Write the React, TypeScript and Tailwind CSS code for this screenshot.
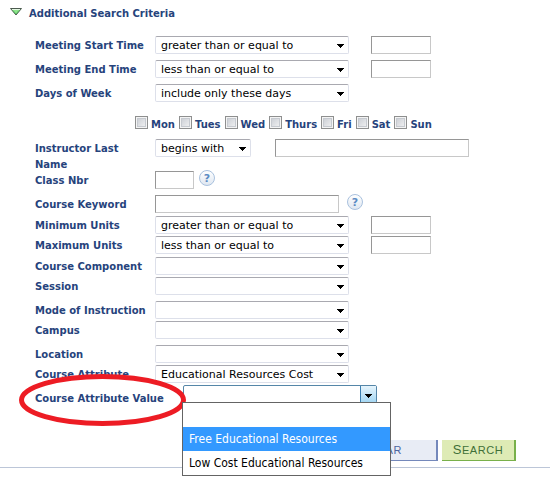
import React from 'react';

type SelectProps = {
  id: string;
  label?: string;
  options: string[];
  className?: string;
};

const Select = ({ id, label, options, className = 'w-[194px]' }: SelectProps) => (
  <div className={`relative shrink-0 ${className}`}>
    <select
      id={id}
      aria-label={label}
      className="block h-[18px] w-full appearance-none rounded-[2px] border border-[#dde0ea] border-t-[#a9a9b0] bg-white pt-px pr-5 pl-[5px] text-[11px] leading-4 text-black"
    >
      {options.map(option => (
        <option key={option}>{option}</option>
      ))}
    </select>
    <svg viewBox="0 0 7 4" className="pointer-events-none absolute top-2 right-[5px] h-1 w-[7px]" shapeRendering="crispEdges">
      <path d="M0 0h7v1H6v1H5v1H4v1H3V3H2V2H1V1H0z" fill="#000" />
    </svg>
  </div>
);

const TextField = ({ id, label, className = 'w-[60px]' }: { id: string; label?: string; className?: string }) => (
  <input
    id={id}
    type="text"
    aria-label={label}
    className={`h-[18px] min-w-0 border border-[#c8c8c8] border-t-[#969696] border-l-[#969696] bg-white px-1 text-[11px] ${className}`}
  />
);

type RowProps = {
  id: string;
  label: string;
  className?: string;
  children: React.ReactNode;
};

const Row = ({ id, label, className = 'h-5', children }: RowProps) => (
  <div className={`flex items-start ${className}`}>
    <label htmlFor={id} className="w-[120px] shrink-0 pt-[2px] pr-4 whitespace-nowrap">
      {label}
    </label>
    {children}
  </div>
);

const HelpButton = ({ label, className }: { label: string; className: string }) => (
  <button
    type="button"
    aria-label={label}
    className={`-mt-px flex h-4 w-4 shrink-0 items-center justify-center rounded-full border border-[#a9c1de] bg-gradient-to-b from-white to-[#dfe7f1] text-[11px] leading-none font-bold text-[#5c8bc4] ${className}`}
  >
    ?
  </button>
);

const days = ['Mon', 'Tues', 'Wed', 'Thurs', 'Fri', 'Sat', 'Sun'];

const attributeValues = ['', 'Free Educational Resources', 'Low Cost Educational Resources'];

export default function App() {
  return (
    <div className="bg-white pb-3 font-['Verdana','DejaVu_Sans',sans-serif] text-[10px] leading-4 font-bold text-[#26437c]">
      <form className="border-b border-[#bcc6d8] pt-[6px] pb-[6px]" onSubmit={e => e.preventDefault()}>
        <h2 className="mb-[14px] pl-[10px]">
          <button type="button" aria-expanded="true" className="flex items-start gap-[7px] font-bold">
            <svg viewBox="0 0 12 8" className="mt-[2px] h-2 w-3">
              <path d="M.5.5h11L6 7z" fill="#8fe68c" stroke="#4c5a50" />
              <path d="M2 1.5h8" stroke="#e4f8e2" />
              <path d="M3 2.5 6 6l3-3.5" fill="none" stroke="#4fb85a" strokeWidth=".8" />
            </svg>
            Additional Search Criteria
          </button>
        </h2>

        <div className="pl-[35px] font-normal [&_label]:font-bold">
          <Row id="start-time" label="Meeting Start Time" className="h-6">
            <Select id="start-time" options={['greater than or equal to', 'less than or equal to']} />
            <TextField id="start-value" label="Start time" className="ml-[22px] w-[60px]" />
          </Row>
          <Row id="end-time" label="Meeting End Time" className="h-6">
            <Select id="end-time" options={['less than or equal to', 'greater than or equal to']} />
            <TextField id="end-value" label="End time" className="ml-[22px] w-[60px]" />
          </Row>
          <Row id="days" label="Days of Week" className="h-6">
            <Select id="days" options={['include only these days', 'include any of these days']} />
          </Row>

          <div className="flex h-[31px] items-start gap-1 pt-2 pl-[100px]">
            {days.map(day => (
              <label key={day} className="flex items-start gap-[3px]">
                <input
                  type="checkbox"
                  className="h-[13px] w-[13px] appearance-none border border-[#8e8f8f] bg-gradient-to-br from-[#c5c9d0] to-[#f6f6f6] shadow-[inset_0_0_0_1px_#f4f4f4,inset_0_0_0_2px_#c6cad0] checked:bg-[#26437c]"
                />
                <span className="pt-px">{day}</span>
              </label>
            ))}
          </div>

          <div className="flex h-8 items-start">
            <label htmlFor="last-name" className="w-[120px] shrink-0 pt-[2px] pr-6">
              Instructor Last Name
            </label>
            <Select
              id="last-name-match"
              label="Last name match"
              options={['begins with', 'contains', 'is exactly']}
              className="w-24"
            />
            <TextField id="last-name" className="ml-6 w-[194px]" />
          </div>
          <Row id="class-nbr" label="Class Nbr" className="h-6">
            <TextField id="class-nbr" className="w-[39px]" />
            <HelpButton label="Class number help" className="ml-[5px]" />
          </Row>
          <Row id="keyword" label="Course Keyword" className="h-[21px]">
            <TextField id="keyword" className="w-[184px]" />
            <HelpButton label="Course keyword help" className="ml-2" />
          </Row>
          <Row id="min-units" label="Minimum Units">
            <Select id="min-units" options={['greater than or equal to', 'less than or equal to']} />
            <TextField id="min-value" label="Minimum units value" className="ml-[22px] w-[60px]" />
          </Row>
          <Row id="max-units" label="Maximum Units" className="h-[21px]">
            <Select id="max-units" options={['less than or equal to', 'greater than or equal to']} />
            <TextField id="max-value" label="Maximum units value" className="ml-[22px] w-[60px]" />
          </Row>
          <Row id="component" label="Course Component">
            <Select id="component" options={['']} />
          </Row>
          <Row id="session" label="Session" className="h-6">
            <Select id="session" options={['']} />
          </Row>
          <Row id="mode" label="Mode of Instruction">
            <Select id="mode" options={['']} />
          </Row>
          <Row id="campus" label="Campus" className="h-6">
            <Select id="campus" options={['']} />
          </Row>
          <Row id="location" label="Location">
            <Select id="location" options={['']} />
          </Row>
          <Row id="attribute" label="Course Attribute">
            <Select id="attribute" options={['Educational Resources Cost']} />
          </Row>

          <div className="relative flex items-start">
            <label htmlFor="attribute-value" className="w-[148px] shrink-0 pt-[6px] whitespace-nowrap">
              Course Attribute Value
            </label>
            <div className="relative w-[194px]">
              <button
                id="attribute-value"
                type="button"
                aria-haspopup="listbox"
                aria-expanded="true"
                className="flex h-[18px] w-full justify-end rounded-[2px] border border-[#5586a8] bg-white"
              >
                <span className="flex h-4 w-4 items-center justify-center border-l border-[#3c7fb1] bg-gradient-to-b from-[#e6f4fc] to-[#a5d7f3] pt-1">
                  <svg viewBox="0 0 7 4" className="h-1 w-[7px]" shapeRendering="crispEdges">
                    <path d="M0 0h7v1H6v1H5v1H4v1H3V3H2V2H1V1H0z" fill="#000" />
                  </svg>
                </span>
              </button>
              <ul
                role="listbox"
                aria-label="Course Attribute Value"
                className="absolute top-[17px] -left-px z-10 w-[209px] border border-[#646464] bg-white font-['Tahoma','DejaVu_Sans_Condensed','DejaVu_Sans',sans-serif] text-xs leading-6 text-black"
              >
                {attributeValues.map((value, i) => (
                  <li
                    key={value}
                    role="option"
                    aria-selected={i === 1}
                    className={`h-6 px-[6px] whitespace-nowrap ${i === 1 ? 'bg-[#3399ff] text-white' : ''}`}
                  >
                    {value}
                  </li>
                ))}
              </ul>
            </div>
            <svg viewBox="0 0 168 56" className="pointer-events-none absolute -top-[13px] -left-4 h-14 w-[168px]">
              <ellipse cx="83.5" cy="28" rx="81" ry="23.5" fill="none" stroke="#ed1c24" strokeWidth="5" />
            </svg>
          </div>
        </div>

        <div className="mt-[33px] flex justify-end gap-1 pr-[34px] font-['Liberation_Sans',Arial,sans-serif] font-normal">
          <button
            type="button"
            className="h-[21px] border-r-2 border-b border-[#7488bb] bg-[#e8ecf5] px-[34px] text-[11px] leading-4 tracking-wider text-[#4e66a0] uppercase first-letter:text-[13px]"
          >
            Clear
          </button>
          <button
            type="submit"
            className="h-[21px] w-[74px] border-r-2 border-b border-[#78b04a] bg-[#deebb5] text-[11px] leading-4 tracking-wider text-[#3f7038] uppercase first-letter:text-[13px]"
          >
            Search
          </button>
        </div>
      </form>
    </div>
  );
}
